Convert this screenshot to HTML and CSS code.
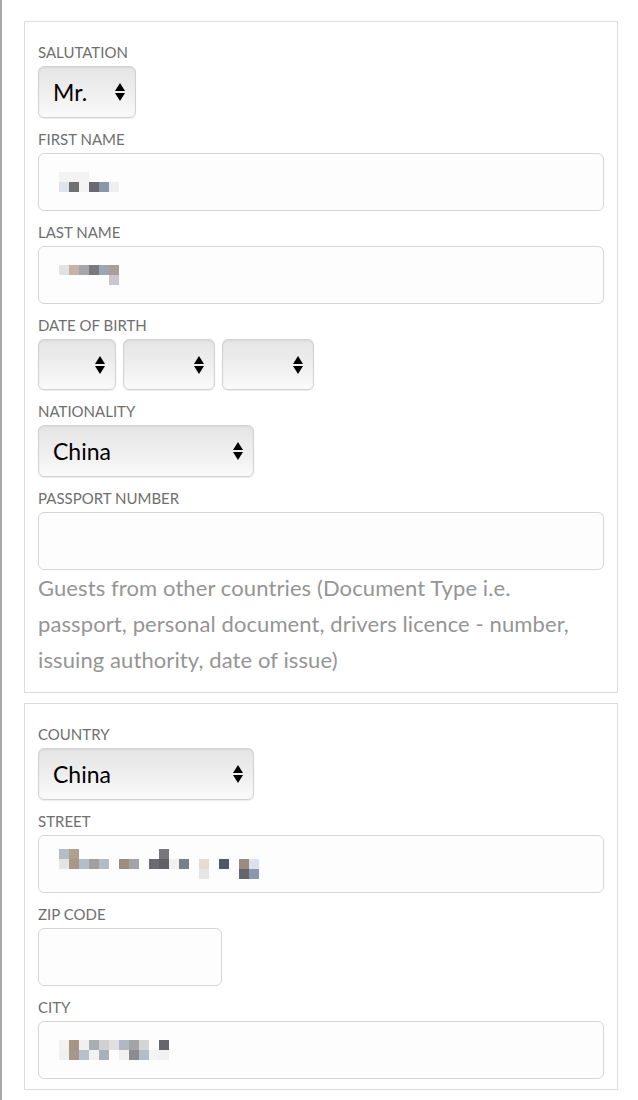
FILE: index.html
```html
<!DOCTYPE html>
<html lang="en">

<head>
  <meta charset="UTF-8">
  <meta name="viewport" content="width=device-width, initial-scale=1.0">
  <title>Guest details</title>
  <link rel="stylesheet" href="styles.css">
</head>

<body>
  <div class="page">
    <fieldset class="group">
      <div class="field">
        <label>Salutation</label>
        <div class="select w-salut"><span>Mr.</span><i class="arrows"></i></div>
      </div>
      <div class="field">
        <label>First name</label>
        <div class="input">
          <svg class="blur" width="60" height="20" viewBox="0 0 6 2" shape-rendering="crispEdges">
            <rect x="0" y="0" width="3" height="1" fill="#f3f3f3" />
            <rect x="0" y="1" width="1" height="1" fill="#dfe4ea" />
            <rect x="1" y="1" width="1" height="1" fill="#707070" />
            <rect x="2" y="1" width="1" height="1" fill="#f4f4f4" />
            <rect x="3" y="1" width="1" height="1" fill="#6a6a6e" />
            <rect x="4" y="1" width="1" height="1" fill="#8a97ab" />
            <rect x="5" y="1" width="1" height="1" fill="#efefef" />
          </svg>
        </div>
      </div>
      <div class="field">
        <label>Last name</label>
        <div class="input">
          <svg class="blur" width="60" height="20" viewBox="0 0 6 2" shape-rendering="crispEdges">
            <rect x="0" y="0" width="1" height="1" fill="#e2e2e4" />
            <rect x="1" y="0" width="1" height="1" fill="#c4b4a8" />
            <rect x="2" y="0" width="1" height="1" fill="#a7a7aa" />
            <rect x="3" y="0" width="1" height="1" fill="#7a7a7e" />
            <rect x="4" y="0" width="1" height="1" fill="#9ea6b2" />
            <rect x="5" y="0" width="1" height="1" fill="#a8a098" />
            <rect x="5" y="1" width="1" height="1" fill="#c8c8cc" />
          </svg>
        </div>
      </div>
      <div class="field">
        <label>Date of birth</label>
        <div class="row">
          <div class="select w-day"><span></span><i class="arrows"></i></div>
          <div class="select w-month"><span></span><i class="arrows"></i></div>
          <div class="select w-year"><span></span><i class="arrows"></i></div>
        </div>
      </div>
      <div class="field">
        <label>Nationality</label>
        <div class="select w-country"><span>China</span><i class="arrows"></i></div>
      </div>
      <div class="field">
        <label>Passport number</label>
        <div class="input"></div>
        <p class="help">Guests from other countries (Document Type i.e. passport, personal document, drivers licence - number, issuing authority, date of issue)</p>
      </div>
    </fieldset>

    <fieldset class="group second">
      <div class="field">
        <label>Country</label>
        <div class="select w-country"><span>China</span><i class="arrows"></i></div>
      </div>
      <div class="field">
        <label>Street</label>
        <div class="input">
          <svg class="blur" width="200" height="30" viewBox="0 0 20 3" shape-rendering="crispEdges">
            <rect x="0" y="0" width="1" height="1" fill="#b8bcc4" />
            <rect x="1" y="0" width="1" height="1" fill="#b0a090" />
            <rect x="10" y="0" width="1" height="1" fill="#77777c" />
            <rect x="0" y="1" width="1" height="1" fill="#e4e4e6" />
            <rect x="1" y="1" width="1" height="1" fill="#a89888" />
            <rect x="2" y="1" width="1" height="1" fill="#b4bcc8" />
            <rect x="3" y="1" width="1" height="1" fill="#a0a0a4" />
            <rect x="4" y="1" width="1" height="1" fill="#b4bcc8" />
            <rect x="6" y="1" width="1" height="1" fill="#a08c7c" />
            <rect x="7" y="1" width="1" height="1" fill="#a4a4a8" />
            <rect x="9" y="1" width="1" height="1" fill="#6c6c70" />
            <rect x="10" y="1" width="1" height="1" fill="#606064" />
            <rect x="11" y="1" width="1" height="1" fill="#f0f0f0" />
            <rect x="12" y="1" width="1" height="1" fill="#7a7e86" />
            <rect x="14" y="1" width="1" height="1" fill="#e8dcd0" />
            <rect x="16" y="1" width="1" height="1" fill="#505866" />
            <rect x="18" y="1" width="1" height="1" fill="#9c8c80" />
            <rect x="19" y="1" width="1" height="1" fill="#dce2ea" />
            <rect x="14" y="2" width="1" height="1" fill="#e6e6e6" />
            <rect x="18" y="2" width="1" height="1" fill="#66666a" />
            <rect x="19" y="2" width="1" height="1" fill="#8898b0" />
          </svg>
        </div>
      </div>
      <div class="field">
        <label>Zip code</label>
        <div class="input w-zip"></div>
      </div>
      <div class="field">
        <label>City</label>
        <div class="input">
          <svg class="blur" width="110" height="20" viewBox="0 0 11 2" shape-rendering="crispEdges">
            <rect x="0" y="0" width="1" height="1" fill="#f2f2f2" />
            <rect x="1" y="0" width="1" height="1" fill="#a89484" />
            <rect x="2" y="0" width="1" height="1" fill="#f0f0f0" />
            <rect x="3" y="0" width="1" height="1" fill="#a8acb4" />
            <rect x="4" y="0" width="1" height="1" fill="#d0d0d2" />
            <rect x="5" y="0" width="1" height="1" fill="#e0e0e0" />
            <rect x="6" y="0" width="1" height="1" fill="#b0b8c4" />
            <rect x="7" y="0" width="1" height="1" fill="#a4a4a8" />
            <rect x="8" y="0" width="1" height="1" fill="#d4d4d4" />
            <rect x="10" y="0" width="1" height="1" fill="#66666a" />
            <rect x="0" y="1" width="1" height="1" fill="#f0f0f0" />
            <rect x="1" y="1" width="1" height="1" fill="#a8988c" />
            <rect x="2" y="1" width="1" height="1" fill="#b8c0cc" />
            <rect x="3" y="1" width="1" height="1" fill="#f2f2f2" />
            <rect x="4" y="1" width="1" height="1" fill="#a8b0bc" />
            <rect x="6" y="1" width="1" height="1" fill="#f0f0f0" />
            <rect x="7" y="1" width="1" height="1" fill="#8c8c90" />
            <rect x="8" y="1" width="1" height="1" fill="#b4bcc8" />
            <rect x="9" y="1" width="1" height="1" fill="#f4f4f4" />
            <rect x="10" y="1" width="1" height="1" fill="#f0f0f0" />
          </svg>
        </div>
      </div>
    </fieldset>
  </div>
</body>

</html>
```

FILE: styles.css
```css
html,
body {
  margin: 0;
  background: #fff;
}

body {
  font-family: Lato, "Liberation Sans", sans-serif;
  color: #222;
}

.page {
  min-height: 1100px;
  box-sizing: border-box;
  border-left: 2px solid #a9a9a9;
  padding: 21px 20px 0 22px;
}

.group {
  margin: 0;
  padding: 20px 13px 14px 13px;
  border: 1px solid #dcdcdc;
  min-width: 0;
}

.group.second {
  margin-top: 10px;
  padding-bottom: 10px;
}

.field {
  margin-bottom: 11px;
}

.field:last-child {
  margin-bottom: 0;
}

.field label {
  display: block;
  height: 20px;
  line-height: 20px;
  margin-bottom: 4px;
  font-size: 15px;
  color: #6f6f6f;
  text-transform: uppercase;
}

.row {
  display: flex;
  gap: 7px;
}

.select {
  box-sizing: border-box;
  display: flex;
  align-items: center;
  height: 52px;
  padding: 0 14px;
  border: 1px solid #d2d2d2;
  border-radius: 6px;
  background: linear-gradient(#e5e5e5, #ededed 45%, #fafafa);
  box-shadow: inset 0 1px 2px rgba(0, 0, 0, 0.06), 0 1px 1px rgba(0, 0, 0, 0.08);
  font-size: 23px;
  color: #000;
}

.select span {
  flex: 1;
}

.select .arrows {
  display: block;
  width: 10px;
  margin-right: -4px;
}

.select .arrows::before,
.select .arrows::after {
  content: '';
  display: block;
  width: 0;
  height: 0;
  border-left: 5px solid transparent;
  border-right: 5px solid transparent;
}

.select .arrows::before {
  border-bottom: 8px solid #000;
  margin-bottom: 2px;
}

.select .arrows::after {
  border-top: 8px solid #000;
}

.w-salut {
  width: 98px;
}

.w-day {
  width: 78px;
  height: 51px;
}

.w-month,
.w-year {
  width: 92px;
  height: 51px;
}

.w-country {
  width: 216px;
}

.input {
  box-sizing: border-box;
  display: flex;
  align-items: center;
  height: 58px;
  padding: 0 20px;
  border: 1px solid #d3d7dc;
  border-radius: 6px;
  background: #fdfdfd;
}

.w-zip {
  width: 184px;
}

.blur {
  display: block;
}

.help {
  margin: 0;
  font-size: 22px;
  line-height: 36px;
  letter-spacing: 0.1px;
  color: #959595;
}
```
